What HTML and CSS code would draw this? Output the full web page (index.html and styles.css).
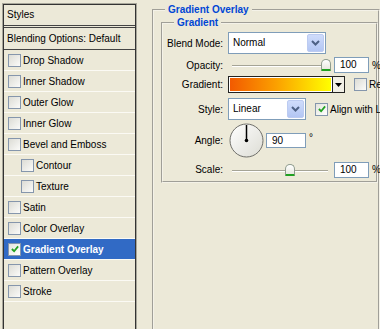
FILE: index.html
```html
<!DOCTYPE html>
<html lang="en">
<head>
    <meta charset="UTF-8">
    <title>Layer Style - Gradient Overlay</title>
    <link rel="stylesheet" href="styles.css">
</head>
<body>
    <div class="dialog">
        <div class="styles-panel">
            <div class="panel-head">Styles</div>
            <div class="panel-blend">Blending Options: Default</div>
            <ul class="effect-list">
                <li class="effect"><span class="check"></span>Drop Shadow</li>
                <li class="effect"><span class="check"></span>Inner Shadow</li>
                <li class="effect"><span class="check"></span>Outer Glow</li>
                <li class="effect"><span class="check"></span>Inner Glow</li>
                <li class="effect"><span class="check"></span>Bevel and Emboss</li>
                <li class="effect sub"><span class="check"></span>Contour</li>
                <li class="effect sub"><span class="check"></span>Texture</li>
                <li class="effect"><span class="check"></span>Satin</li>
                <li class="effect"><span class="check"></span>Color Overlay</li>
                <li class="effect active">
                    <span class="check checked">
                        <svg width="8" height="8" viewBox="0 0 9 9"><path d="M1 4.5 L3.5 7 L8 1.5" fill="none" stroke="#21a121" stroke-width="2"/></svg>
                    </span>Gradient Overlay
                </li>
                <li class="effect"><span class="check"></span>Pattern Overlay</li>
                <li class="effect"><span class="check"></span>Stroke</li>
                <li class="effect empty"></li>
            </ul>
        </div>

        <fieldset class="group outer">
            <legend>Gradient Overlay</legend>
            <fieldset class="group inner">
                <legend>Gradient</legend>
                <div class="form">
                    <label class="form-label row-blend">Blend Mode:</label>
                    <div class="control row-blend">
                        <div class="select select-wide">
                            <span class="select-text">Normal</span>
                            <span class="select-btn">
                                <svg width="9" height="6" viewBox="0 0 9 6"><path d="M1 1 L4.5 4.5 L8 1" fill="none" stroke="#4d6185" stroke-width="2"/></svg>
                            </span>
                        </div>
                    </div>

                    <label class="form-label row-opacity">Opacity:</label>
                    <div class="control row-opacity">
                        <div class="slider">
                            <span class="track"></span>
                            <span class="thumb" style="left: 98px"></span>
                        </div>
                        <span class="num">100</span>
                        <span class="unit">%</span>
                    </div>

                    <label class="form-label row-gradient">Gradient:</label>
                    <div class="control row-gradient">
                        <div class="swatch"><span class="swatch-fill"></span></div>
                        <span class="swatch-btn">
                            <svg width="7" height="4" viewBox="0 0 7 4"><path d="M0 0 H7 L3.5 4 Z" fill="#000"/></svg>
                        </span>
                        <span class="check opt"></span>
                        <span class="opt-text">Reverse</span>
                    </div>

                    <label class="form-label row-style">Style:</label>
                    <div class="control row-style">
                        <div class="select select-short">
                            <span class="select-text">Linear</span>
                            <span class="select-btn">
                                <svg width="9" height="6" viewBox="0 0 9 6"><path d="M1 1 L4.5 4.5 L8 1" fill="none" stroke="#4d6185" stroke-width="2"/></svg>
                            </span>
                        </div>
                        <span class="check checked opt">
                            <svg width="8" height="8" viewBox="0 0 9 9"><path d="M1 4.5 L3.5 7 L8 1.5" fill="none" stroke="#21a121" stroke-width="2"/></svg>
                        </span>
                        <span class="opt-text">Align with Layer</span>
                    </div>

                    <label class="form-label row-angle">Angle:</label>
                    <div class="control row-angle">
                        <svg class="dial" width="35" height="35" viewBox="0 0 35 35">
                            <defs>
                                <linearGradient id="dialFill" x1="0" y1="0" x2="1" y2="1">
                                    <stop offset="0" stop-color="#ffffff"/>
                                    <stop offset="1" stop-color="#dcdcd4"/>
                                </linearGradient>
                            </defs>
                            <circle cx="17.5" cy="17.5" r="16.5" fill="url(#dialFill)" stroke="#6f6f6a" stroke-width="1"/>
                            <line x1="17.5" y1="17.5" x2="17.5" y2="2" stroke="#000" stroke-width="1.5"/>
                            <circle cx="17.5" cy="17.5" r="1.8" fill="#000"/>
                        </svg>
                        <span class="num num-angle">90</span>
                        <span class="unit degree">&deg;</span>
                    </div>

                    <label class="form-label row-scale">Scale:</label>
                    <div class="control row-scale">
                        <div class="slider">
                            <span class="track"></span>
                            <span class="thumb" style="left: 62px"></span>
                        </div>
                        <span class="num">100</span>
                        <span class="unit">%</span>
                    </div>
                </div>
            </fieldset>
        </fieldset>
    </div>
</body>
</html>
```

FILE: styles.css
```css
* {
    margin: 0;
    padding: 0;
    box-sizing: border-box;
}

body {
    background: #ece9d8;
    font-family: 'Liberation Sans', Arial, sans-serif;
    font-size: 10px;
    color: #000;
    overflow: hidden;
    height: 329px;
}

.dialog {
    display: flex;
    align-items: flex-start;
    padding: 4px 0 0 3px;
    white-space: nowrap;
}

/* left: list of layer effects */

.styles-panel {
    width: 133px;
    height: 340px;
    flex-shrink: 0;
    border: 1px solid #333;
    box-shadow: 0 0 0 1px #a8a79b;
}

.panel-head {
    height: 23px;
    line-height: 20px;
    padding-left: 3px;
    border-bottom: 3px double #444;
}

.panel-blend {
    height: 22px;
    line-height: 21px;
    padding-left: 3px;
    border-bottom: 1px solid #444;
}

.effect-list {
    list-style: none;
}

.effect {
    display: flex;
    align-items: center;
    height: 21px;
    padding-left: 4px;
    border-bottom: 1px solid #fbfaf4;
}

.effect.sub {
    padding-left: 17px;
}

.effect.active {
    background: #316ac5;
    color: #fff;
    font-weight: bold;
}

.effect.empty {
    border-bottom: none;
}

.check {
    width: 13px;
    height: 13px;
    flex-shrink: 0;
    margin-right: 2px;
    border: 1px solid #8596ac;
    background: linear-gradient(135deg, #dcdcd5, #fbfbf9);
    display: flex;
    align-items: center;
    justify-content: center;
}

.check.checked {
    background: linear-gradient(135deg, #e4e4dd, #ffffff);
}

/* right: group boxes */

.group {
    border: 2px groove #f4f2e8;
    min-width: 0;
}

.group legend {
    color: #0046d5;
    font-weight: bold;
    padding: 0 3px;
    line-height: 12px;
}

.outer {
    margin-left: 16px;
    width: 260px;
    height: 340px;
    padding: 0 0 0 7px;
}

.outer > legend {
    margin-left: 4px;
}

.inner {
    margin-top: 1px;
    padding: 3px 0 3px 4px;
}

.inner > legend {
    margin-left: 7px;
}

.form {
    display: grid;
    grid-template-columns: 56px auto;
    grid-template-rows: 22px 16px 17px 24px 35px 17px;
    column-gap: 5px;
    row-gap: 3px;
}

.form .row-style {
    margin-top: 2px;
}

.form-label {
    text-align: right;
    align-self: center;
}

.control {
    display: flex;
    align-items: center;
}

/* dropdowns */

.select {
    height: 22px;
    display: flex;
    align-items: stretch;
    background: #fff;
    border: 1px solid #7f9db9;
    padding: 1px;
}

.select-wide {
    width: 98px;
}

.select-short {
    width: 78px;
}

.select-text {
    flex: 1;
    line-height: 18px;
    padding-left: 3px;
}

.select-btn {
    width: 17px;
    display: flex;
    align-items: center;
    justify-content: center;
    background: linear-gradient(#cfdcfb, #b3c6f3);
    border: 1px solid #bccbf1;
    border-radius: 2px;
}

/* sliders and number boxes */

.slider {
    position: relative;
    width: 104px;
    height: 16px;
    flex-shrink: 0;
}

.track {
    position: absolute;
    left: 4px;
    right: 4px;
    top: 8px;
    height: 2px;
    border-top: 1px solid #a5a496;
    border-bottom: 1px solid #fff;
}

.thumb {
    position: absolute;
    top: 2px;
    width: 10px;
    height: 12px;
    margin-left: -5px;
    background: linear-gradient(#ffffff, #e8e8e0);
    border: 1px solid #8f9c8f;
    border-bottom: 2px solid #21a121;
    border-radius: 5px 5px 1px 1px;
}

.num {
    width: 35px;
    height: 16px;
    line-height: 14px;
    margin-left: 2px;
    padding-left: 5px;
    background: #fff;
    border: 1px solid #7f9db9;
}

.num-angle {
    width: 40px;
    height: 15px;
    line-height: 13px;
    margin-left: 2px;
}

.unit {
    margin-left: 3px;
}

.degree {
    align-self: flex-start;
    margin-top: 9px;
}

/* gradient swatch */

.swatch {
    width: 105px;
    height: 17px;
    border: 1px solid #222;
    padding: 1px;
    background: #fff;
    flex-shrink: 0;
}

.swatch-fill {
    display: block;
    height: 100%;
    background: linear-gradient(to right, #f25a00, #fb9f00 45%, #ffff00);
}

.swatch-btn {
    width: 12px;
    height: 17px;
    border: 1px solid #222;
    border-left: none;
    background: #f1efe6;
    display: flex;
    align-items: center;
    justify-content: center;
}

.opt {
    margin-left: 9px;
}

.opt-text {
    line-height: 13px;
}

.dial {
    margin-left: 1px;
    display: block;
}
```
